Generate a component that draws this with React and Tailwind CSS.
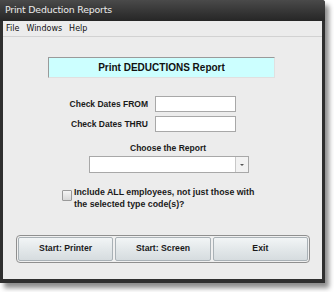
export default function App() {
  return (
    <div className="w-[334px] h-[292px] bg-white font-['Liberation_Sans',Arial,sans-serif]">
      <div className="w-[325px] h-[283px] flex flex-col bg-[#2f2f2f] rounded-tr-[3px] shadow-[4px_5px_5px_rgba(0,0,0,0.45)]">
        {/* title bar */}
        <div className="h-[21px] shrink-0 flex items-center px-[5px] bg-gradient-to-b from-[#4a4a4a] to-[#262626] rounded-tr-[3px]">
          <span className="text-[9.4px] text-[#ececec] font-['DejaVu_Sans',sans-serif] tracking-[-0.2px]">Print Deduction Reports</span>
        </div>
        <div className="flex-1 mx-[3px] mb-[4px] bg-[#ececec] flex flex-col">
          {/* menu */}
          <div className="h-[16px] shrink-0 flex items-center gap-[7px] px-[3px] text-[8px] text-[#111] border-b border-[#d2d2d2] font-['DejaVu_Sans',sans-serif]">
            <span>File</span>
            <span>Windows</span>
            <span>Help</span>
          </div>

          <div className="mt-[20px] ml-[45px] w-[227px] h-[21px] shrink-0 bg-[#ccffff] border-t border-l border-[#9a9a9a] border-b border-r border-b-[#e0e0e0] border-r-[#e0e0e0] flex items-center justify-center">
            <span className="text-[10px] font-bold text-[#111]">Print DEDUCTIONS Report</span>
          </div>

          <div className="mt-[18px] flex flex-col gap-[4px]">
            <div className="flex items-center h-[16px]">
              <span className="w-[145px] text-right text-[8.5px] font-bold text-[#1a1a1a] leading-[16px]">Check Dates FROM</span>
              <div className="ml-[7px] w-[81px] h-[16px] bg-white border border-[#a8a8a8]"></div>
            </div>
            <div className="flex items-center h-[16px]">
              <span className="w-[145px] text-right text-[8.5px] font-bold text-[#1a1a1a] leading-[16px]">Check Dates THRU</span>
              <div className="ml-[7px] w-[81px] h-[16px] bg-white border border-[#a8a8a8]"></div>
            </div>
          </div>

          <div className="mt-[11px] h-[11px] leading-[11px] ml-[127px] text-[8.5px] font-bold text-[#1a1a1a]">Choose the Report</div>
          <div className="mt-[2px] ml-[86px] w-[160px] h-[17px] shrink-0 bg-white border border-[#a8a8a8] flex justify-end">
            <div className="w-[13px] h-full border-l border-[#c8c8c8] bg-[#f2f2f2] flex items-center justify-center">
              <div className="w-0 h-0 border-l-[2px] border-r-[2px] border-t-[2px] border-l-transparent border-r-transparent border-t-[#555]"></div>
            </div>
          </div>

          <div className="mt-[13px] ml-[59px] flex items-start gap-[2px]">
            <div className="mt-[4px] w-[10px] h-[11px] bg-gradient-to-b from-[#f4f4f4] to-[#d8d8d8] border border-[#9a9a9a] rounded-[1px]"></div>
            <div className="text-[8.8px] font-bold text-[#1a1a1a] leading-[12px]">
              Include ALL employees, not just those with
              <br />
              the selected type code(s)?
            </div>
          </div>

          <div className="mt-[25px] ml-[13px] w-[294px] h-[28px] shrink-0 border border-[#8f8f8f] rounded-[4px] bg-[#f0f0f0] flex items-center gap-[2px] px-[1px]">
            {["Start: Printer", "Start: Screen", "Exit"].map((t) => (
              <div
                key={t}
                className="flex-1 h-[24px] flex items-center justify-center border border-[#a9b1b6] rounded-[2px] bg-gradient-to-b from-[#f2f5f6] via-[#e3e8ea] to-[#d6dcdf] text-[8.7px] font-bold text-[#1a1a1a]"
              >
                {t}
              </div>
            ))}
          </div>
        </div>
      </div>
    </div>
  );
}
